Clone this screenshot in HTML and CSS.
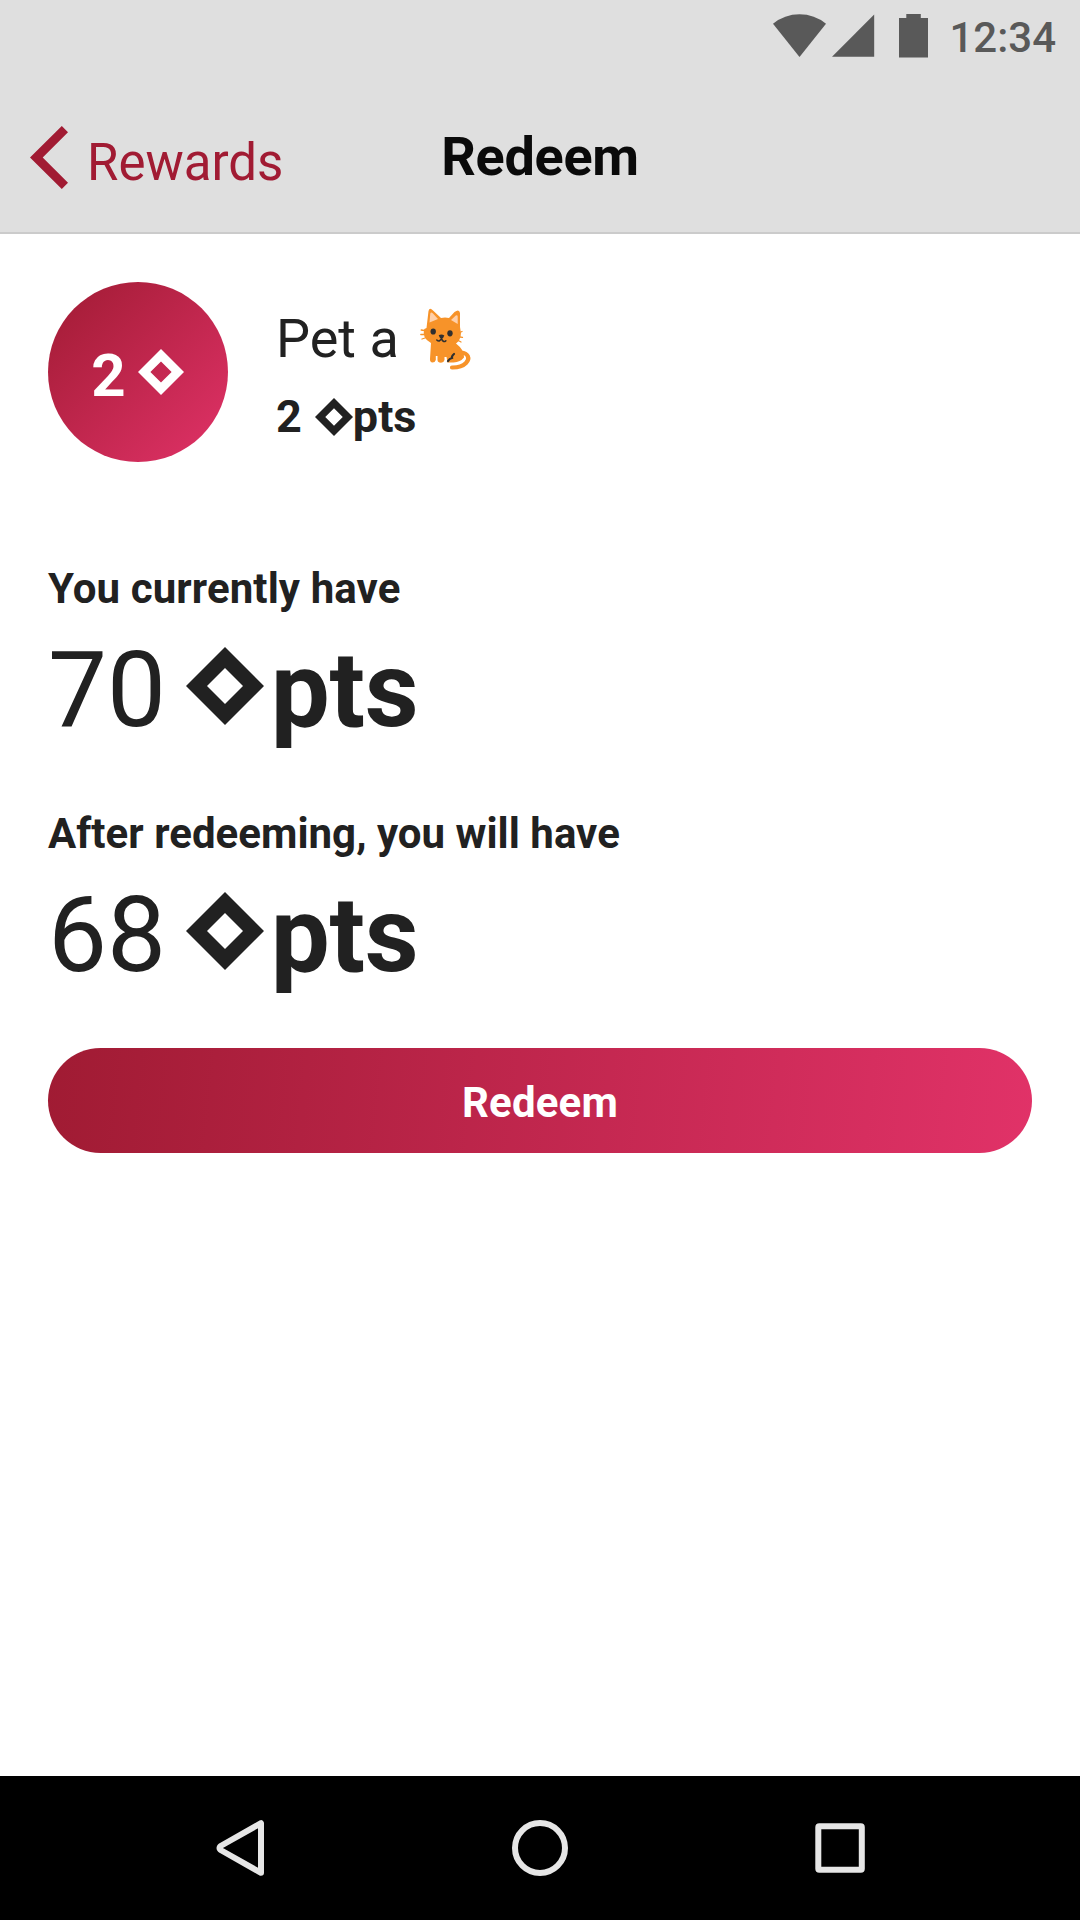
FILE: index.html
```html
<!DOCTYPE html>
<html lang="en">
<head>
<meta charset="utf-8">
<title>Redeem</title>
<link rel="stylesheet" href="styles.css">
</head>
<body>
<svg class="defs" width="0" height="0" aria-hidden="true">
  <symbol id="diamond" viewBox="0 0 78 78">
    <path fill="currentColor" fill-rule="evenodd" d="M39 0 78 39 39 78 0 39ZM39 21 21 39 39 57 57 39Z"/>
  </symbol>
</svg>

<div class="status-bar">
  <svg class="status-icons" viewBox="0 0 156 44" aria-hidden="true">
    <path d="M26.500 43 0 9.800Q11.500.3 26.500.3T53 9.800Z"/>
    <path d="M59 42.700 101.200.5V42.700Z"/>
    <path d="M126 4h7.300V0h14.500v4h7.200v39.500h-29Z"/>
  </svg>
  <span class="clock">12:34</span>
</div>

<header class="header">
  <a class="back">
    <svg class="chevron" viewBox="0 0 38 63" aria-hidden="true"><path d="M0 31.500 31.800 0 38 6.200 12.700 31.500 38 56.800 31.800 63Z"/></svg>
    <span class="back-label">Rewards</span>
  </a>
  <h1 class="title">Redeem</h1>
</header>

<main class="content">
  <section class="reward">
    <div class="badge">
      <span class="badge-number">2</span>
      <svg class="badge-diamond"><use href="#diamond"/></svg>
    </div>
    <div class="reward-info">
      <div class="reward-name">Pet a
        <svg class="cat" viewBox="0 0 54 66" role="img" aria-label="cat">
          <path fill="none" stroke="#f79329" stroke-width="4.200" stroke-linecap="round" d="M42 45.500C49 46 51.500 51.500 47 56C43 60 39 60.600 33 60.500"/>
          <path fill="#f79329" d="M7.500 21 9.500 4Q10.600 0 14 3.500L22 11Q26 10 30 11L35.500 5Q40.300 1.500 41 6L41 20Q44 32 37 36.500Q45.500 43 45 50.500Q41.500 55 34.500 55.500H28.500L27.500 50H25.500V53Q25 55.500 22 55.800Q18.600 55.800 18.500 53V49H16.800V53Q16 55.500 13.500 55.500Q10.800 55.300 11 52L12 36Q2.500 31 5.300 22Z"/>
          <path fill="#ffd0aa" d="m10.500 15.500.8-9Q12 4.500 14 6.500L19 12ZM32 13l4.800-4.500Q38.500 7.500 38.700 9.500L38.700 17Z"/>
          <path fill="none" stroke="#f79329" stroke-width="1.300" stroke-linecap="round" d="m2.200 23 6 1M1.800 27.500h7M3 32l6-2M37.500 27l5.500-2.500M37.500 29.500l6 .8M36.500 32l5.500 3"/>
          <g fill="#2f2f2f">
            <ellipse cx="14.200" cy="24.500" rx="2.700" ry="3.100"/>
            <ellipse cx="31" cy="26.300" rx="2.700" ry="3.100"/>
            <path d="M19.700 28.300Q22.500 26.800 25.300 28.500Q24.500 31.500 22.500 31.600Q20.500 31.300 19.700 28.300Z"/>
          </g>
          <path fill="none" stroke="#2f2f2f" stroke-width="1.600" stroke-linecap="round" d="M17.800 33Q20.500 35.500 22.500 31.500Q24 36 26.800 33.800"/>
          <path fill="none" stroke="#2f2f2f" stroke-width="2.200" stroke-linecap="round" d="M29 54Q30.500 51.500 33 51Q32.500 49 35 47"/>
        </svg>
      </div>
      <div class="reward-cost">2 <svg class="cost-diamond"><use href="#diamond"/></svg>pts</div>
    </div>
  </section>

  <section class="balance balance-current">
    <h2 class="balance-label">You currently have</h2>
    <div class="amount"><span class="amount-number">70</span><svg class="amount-diamond"><use href="#diamond"/></svg><span class="amount-unit">pts</span></div>
  </section>
  <section class="balance balance-after">
    <h2 class="balance-label">After redeeming, you will have</h2>
    <div class="amount"><span class="amount-number">68</span><svg class="amount-diamond"><use href="#diamond"/></svg><span class="amount-unit">pts</span></div>
  </section>

  <button class="redeem">Redeem</button>
</main>

<nav class="nav-bar">
  <svg class="nav-icon" viewBox="0 0 60 60"><path d="M51 5.200V54.800L11.500 32.500Q7.500 30 11.500 27.500Z"/></svg>
  <svg class="nav-icon" viewBox="0 0 60 60"><circle cx="30" cy="30" r="25"/></svg>
  <svg class="nav-icon" viewBox="0 0 60 60"><rect x="8.300" y="8.300" width="43.500" height="43.500" rx="1"/></svg>
</nav>
</body>
</html>
```
FILE: styles.css
```css
* { box-sizing: border-box; }

body {
  margin: 0;
  height: 1920px;
  display: flex;
  flex-direction: column;
  background: #fff;
  color: #212121;
  font-family: Roboto, sans-serif;
}

svg { display: block; flex: none; }
.defs { display: none; }

.status-bar {
  height: 72px;
  padding: 3px 24px 0 0;
  display: flex;
  justify-content: flex-end;
  align-items: center;
  gap: 20px;
  background: #dfdfdf;
  color: #595959;
}
.status-icons { width: 156px; height: 44px; margin-top: -3px; fill: currentColor; }
.clock { font-size: 42px; font-weight: 500; line-height: 50px; }

.header {
  height: 162px;
  padding: 9px 30px 0;
  display: grid;
  grid-template-columns: 1fr auto 1fr;
  align-items: center;
  background: #dfdfdf;
  border-bottom: 2px solid #cbcbcb;
}
.back { display: flex; align-items: center; gap: 19px; color: #a11b33; }
.chevron { width: 38px; height: 63px; margin-top: 2px; fill: currentColor; }
.back-label { font-size: 51px; line-height: 60px; padding-top: 12px; }
.title {
  margin: 0;
  font-size: 54px;
  font-weight: 700;
  line-height: 64px;
  letter-spacing: -0.3px;
  color: #0a0a0a;
}

.content { flex: 1; padding: 48px 48px 0; }

.reward { display: flex; gap: 48px; }
.badge {
  width: 180px;
  height: 180px;
  border-radius: 50%;
  display: flex;
  justify-content: center;
  align-items: center;
  gap: 12px;
  padding-right: 1px;
  background: linear-gradient(135deg, #a01b33, #e13268);
  color: #fff;
}
.badge-number { padding-top: 7px; font-size: 60px; font-weight: 700; line-height: 70px; }
.badge-diamond { width: 46px; height: 46px; }

.reward-info { padding-top: 25px; }
.reward-name { display: flex; gap: 20px; font-size: 54px; line-height: 64px; }
.cat { width: 54px; height: 66px; }
.reward-cost {
  display: flex;
  align-items: center;
  margin-top: 14px;
  font-size: 45px;
  font-weight: 700;
  line-height: 60px;
}
.cost-diamond { width: 38px; height: 38px; margin: 0 0 0 13px; }

.balance-current { margin-top: 102px; }
.balance-after { margin-top: 57px; }
.balance-label { margin: 0; font-size: 42px; font-weight: 700; line-height: 50px; }
.balance-current .balance-label { letter-spacing: 0.1px; }
.balance-after .balance-label { letter-spacing: 0.03px; }
.amount { display: flex; margin-top: 14px; padding-top: 1px; font-size: 105px; line-height: 123px; }
.amount-diamond { width: 78px; height: 78px; margin: 17.5px 7.2px 0 19.6px; }
.amount-unit { font-weight: 700; letter-spacing: -0.3px; }

.redeem {
  display: block;
  width: 100%;
  height: 105px;
  margin-top: 51px;
  padding: 5px 0 0;
  border: 0;
  border-radius: 53px;
  background: linear-gradient(96.1deg, #a01b33, #e13268);
  color: #fff;
  font: 700 42px/50px Roboto, sans-serif;
  letter-spacing: 0.2px;
}

.nav-bar {
  height: 144px;
  display: flex;
  justify-content: center;
  align-items: center;
  gap: 240px;
  background: #000;
}
.nav-icon {
  width: 60px;
  height: 60px;
  fill: none;
  stroke: #e6e6e6;
  stroke-width: 6;
  stroke-linejoin: round;
}
```
